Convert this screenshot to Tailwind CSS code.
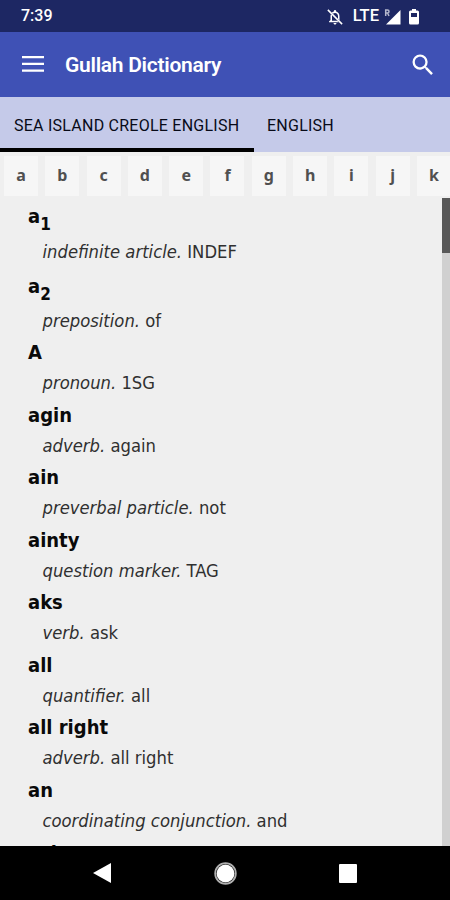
<!doctype html>
<html lang="en">
    <head>
        <meta charset="UTF-8">

        <title>Gullah Dictionary</title>

        <!-- TAILWIND -->
        <script src="https://cdn.jsdelivr.net/npm/@tailwindcss/browser@4"></script>
    </head>
    <body class="bg-black">

        <!-- SCREEN -->
        <div class="flex flex-col w-[450px] h-[900px] overflow-hidden bg-[#efefef] font-[Roboto,sans-serif]">

            <!-- STATUS BAR -->
            <div class="flex items-center justify-between h-8 shrink-0 bg-[#1d2763] pl-[21px] pr-[31px] text-white">
                <span class="text-base font-medium leading-[34px]">7:39</span>

                <div class="flex items-center">

                    <!-- MUTED -->
                    <svg class="w-[18px] h-[18px] mr-[9px] mt-0.5" viewBox="0 0 24 24" fill="white">
                        <path d="M7.600 6.200C8.400 5.400 9.400 4.900 10.500 4.680V4a1.500 1.500 0 0 1 3 0v.68C16.400 5.360 18 7.920 18 11v5.200l-2-2V11c0-2.480-1.510-4.500-4-4.500-1.100 0-2 .4-2.700 1.050z"/>
                        <path d="M6.400 8.500C6.100 9.300 6 10.100 6 11v5l-2 2v1h13l-2-2H8v-6c0-.4 0-.8.1-1.200zM12 22c1.110 0 2-.89 2-2h-4c0 1.110.89 2 2 2z"/>
                        <path d="M2.500 2.500 21.500 21.500" stroke="white" stroke-width="2"/>
                    </svg>

                    <span class="text-[16.500px] font-medium leading-[34px]">LTE</span>

                    <!-- SIGNAL -->
                    <svg class="w-[17px] h-4 ml-[5px] mt-px" viewBox="0 0 17 16">
                        <path d="M16.500 1v14.500H2z" fill="white"/>
                        <path d="M0 0h7v6l-4 3H0z" fill="#1d2763"/>
                        <path d="M1.700 7V1h1.800a1.500 1.500 0 0 1 0 3H2m1.500 0L5 7" fill="none" stroke="#b5b8cd" stroke-width="1.500"/>
                    </svg>

                    <!-- BATTERY -->
                    <svg class="w-[10px] h-4 ml-2 mt-px" viewBox="0 0 10 16">
                        <path d="M3 0h4v1.500h1.500A1.500 1.500 0 0 1 10 3v11a1.500 1.500 0 0 1-1.500 1.500h-7A1.500 1.500 0 0 1 0 14V3a1.500 1.500 0 0 1 1.500-1.500H3z" fill="white"/>
                        <path d="M2 4h6v4H2z" fill="#1d2763"/>
                    </svg>
                </div>
            </div>

            <!-- APP BAR -->
            <div class="flex items-center h-[65px] shrink-0 bg-[#3f51b5] pl-[22px] pr-4 text-white">
                <svg class="w-[22px] h-4 -mt-0.5" viewBox="0 0 22 16" fill="white">
                    <path d="M0 0h22v2.300H0zM0 6.700h22V9H0zM0 13.400h22v2.300H0z"/>
                </svg>
                <h1 class="ml-[21px] text-[21px] leading-8 font-semibold tracking-[-0.28px]">Gullah Dictionary</h1>
                <svg class="ml-auto -mr-[3px] w-[28px] h-[28px]" viewBox="0 0 24 24" fill="white">
                    <path d="M15.500 14h-.79l-.28-.27A6.471 6.471 0 0 0 16 9.500 6.500 6.500 0 1 0 9.500 16c1.610 0 3.090-.59 4.230-1.570l.27.28v.79l5 4.990L20.490 19l-4.990-5zm-6 0C7.010 14 5 11.990 5 9.500S7.010 5 9.500 5 14 7.010 14 9.500 11.990 14 9.500 14z"/>
                </svg>
            </div>

            <!-- TABS -->
            <div class="flex h-[55px] shrink-0 bg-[#c5cae9] text-base text-[#080a18] tracking-[0.240px]">
                <div class="w-[254px] border-b-4 border-black pl-[14px] leading-[57px] whitespace-nowrap">SEA ISLAND CREOLE ENGLISH</div>
                <div class="pl-[13px] leading-[57px]">ENGLISH</div>
            </div>

            <!-- LETTERS -->
            <div class="flex gap-[7.300px] h-[46px] shrink-0 overflow-hidden pl-1 pt-1 text-center text-base leading-[39px] font-bold text-[#505050] font-[Noto_Sans,sans-serif]">
                <div class="w-[34px] h-10 shrink-0 bg-[#f6f6f6]">a</div>
                <div class="w-[34px] h-10 shrink-0 bg-[#f6f6f6]">b</div>
                <div class="w-[34px] h-10 shrink-0 bg-[#f6f6f6]">c</div>
                <div class="w-[34px] h-10 shrink-0 bg-[#f6f6f6]">d</div>
                <div class="w-[34px] h-10 shrink-0 bg-[#f6f6f6]">e</div>
                <div class="w-[34px] h-10 shrink-0 bg-[#f6f6f6]">f</div>
                <div class="w-[34px] h-10 shrink-0 bg-[#f6f6f6]">g</div>
                <div class="w-[34px] h-10 shrink-0 bg-[#f6f6f6]">h</div>
                <div class="w-[34px] h-10 shrink-0 bg-[#f6f6f6]">i</div>
                <div class="w-[34px] h-10 shrink-0 bg-[#f6f6f6]">j</div>
                <div class="w-[34px] h-10 shrink-0 bg-[#f6f6f6]">k</div>
            </div>

            <!-- ENTRIES -->
            <div class="flex h-[648px] shrink-0 overflow-hidden">
                <dl class="grow pl-7 pt-[3px] text-[18.250px] leading-[31.250px] text-[#303030] font-[DejaVu_Sans_Condensed,DejaVu_Sans,sans-serif] [&_dt]:text-[20px] [&_dt]:font-bold [&_dt]:text-[#0a0a0a] [&_dt]:h-[31.250px] [&_dd]:h-[31.250px] [&_dd]:pl-[14.500px] [&_dd]:leading-[30px]">
                    <dt class="mb-[5px]">a<sub class="text-[17px] leading-none bottom-[-7px]">1</sub></dt>
                    <dd><i>indefinite article.</i> INDEF</dd>
                    <dt class="mt-[2px] mb-[4px]">a<sub class="text-[17px] leading-none bottom-[-7px]">2</sub></dt>
                    <dd><i>preposition.</i> of</dd>
                    <dt>A</dt>
                    <dd><i>pronoun.</i> 1SG</dd>
                    <dt>agin</dt>
                    <dd><i>adverb.</i> again</dd>
                    <dt>ain</dt>
                    <dd><i>preverbal particle.</i> not</dd>
                    <dt>ainty</dt>
                    <dd><i>question marker.</i> TAG</dd>
                    <dt>aks</dt>
                    <dd><i>verb.</i> ask</dd>
                    <dt>all</dt>
                    <dd><i>quantifier.</i> all</dd>
                    <dt>all right</dt>
                    <dd><i>adverb.</i> all right</dd>
                    <dt>an</dt>
                    <dd><i>coordinating conjunction.</i> and</dd>
                    <dt class="pt-px">ash</dt>
                </dl>

                <!-- SCROLLBAR -->
                <div class="w-2 bg-[#d0d0d0]">
                    <div class="h-[55px] bg-[#585858]"></div>
                </div>
            </div>

            <!-- NAVIGATION -->
            <div class="flex items-center grow bg-black pl-[93px]">
                <svg class="w-[18px] h-5" viewBox="0 0 18 20" fill="white">
                    <path d="M18 0v20L0 10z"/>
                </svg>
                <svg class="ml-[103px] w-[23px] h-[23px]" viewBox="0 0 23 23">
                    <circle cx="11.500" cy="11.500" r="10.300" fill="none" stroke="#b0b0b0" stroke-width="1.800"/>
                    <circle cx="11.500" cy="11.500" r="8.900" fill="white"/>
                </svg>
                <div class="ml-[102px] w-[18px] h-[19px] rounded-[1px] bg-white"></div>
            </div>
        </div>
    </body>
</html>
